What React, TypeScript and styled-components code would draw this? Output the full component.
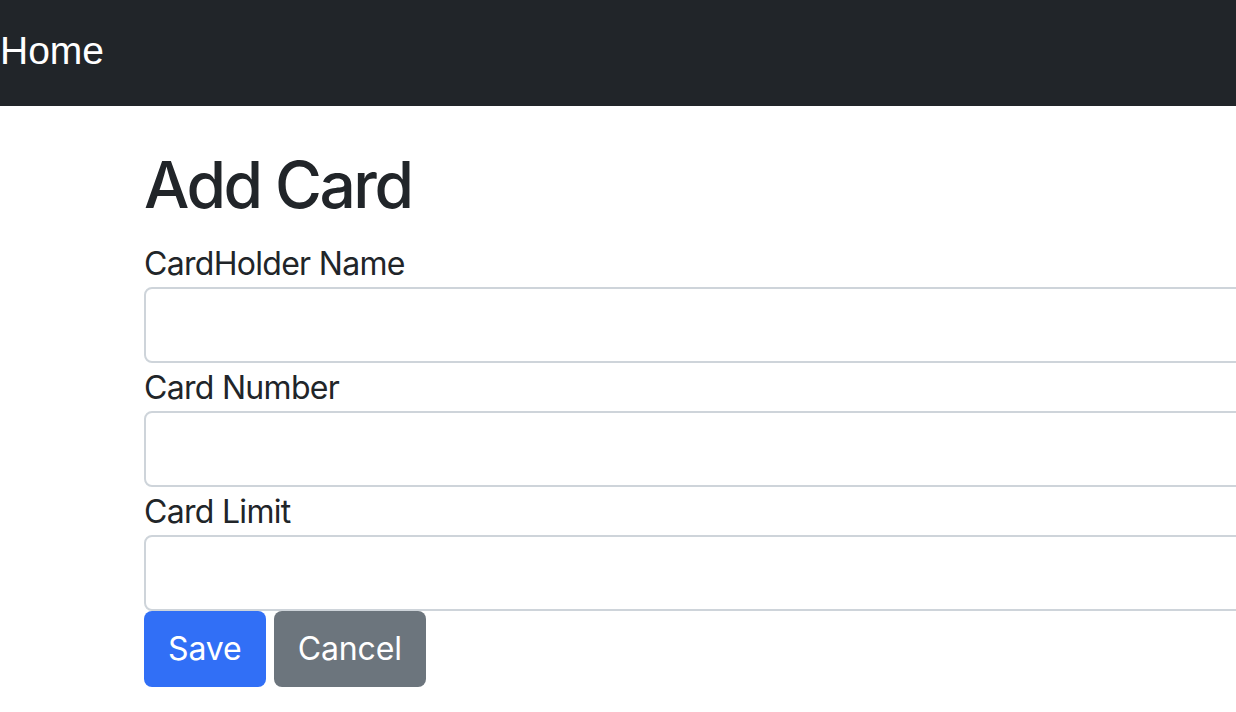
import { FunctionComponent } from "react";
import styled, { createGlobalStyle } from "styled-components";

const GlobalStyle = createGlobalStyle`
  html, body {
    margin: 0;
    padding: 0;
    overflow: hidden;
    background: #ffffff;
  }
  body {
    font-family: Inter, "Noto Sans", "Liberation Sans", sans-serif;
    color: #212529;
  }
  * {
    box-sizing: border-box;
  }
`;

const Navbar = styled.nav`
  height: 106px;
  background-color: #212529;
  display: flex;
  align-items: center;
`;

const Brand = styled.a`
  font-family: "Liberation Sans", Arial, sans-serif;
  font-size: 39px;
  line-height: 60px;
  color: #ffffff;
  text-decoration: none;
  padding-left: 0;
  margin-top: -4px;
`;

const Main = styled.main`
  padding: 41px 0 0 144px;
`;

const Title = styled.h1`
  margin: 0 0 15px;
  font-size: 64px;
  font-weight: 500;
  line-height: 1.2;
  letter-spacing: -2.5px;
`;

const Form = styled.form`
  width: 1140px;
  display: flex;
  flex-direction: column;
`;

const Label = styled.label`
  font-size: 32px;
  line-height: 48px;
  letter-spacing: -0.7px;
  display: block;
  padding-top: 1px;
  margin-bottom: -1px;
`;

const Input = styled.input`
  display: block;
  width: 100%;
  height: 76px;
  padding: 12px 24px;
  font-size: 32px;
  font-family: inherit;
  color: #212529;
  background: #ffffff;
  border: 2px solid #ced4da;
  border-radius: 8px;
  outline: none;
`;

const Actions = styled.div`
  display: flex;
  gap: 8px;
`;

const Button = styled.button<{ $variant: "primary" | "secondary" }>`
  height: 76px;
  padding: 0 24px;
  font-family: inherit;
  font-size: 32px;
  letter-spacing: -0.1px;
  color: #ffffff;
  border: none;
  border-radius: 8px;
  background-color: ${(p) => (p.$variant === "primary" ? "#316ff6" : "#6c757d")};
  cursor: pointer;
`;

const fields = ["CardHolder Name", "Card Number", "Card Limit"];

const App: FunctionComponent = () => {
  return (
    <>
      <GlobalStyle />
      <Navbar>
        <Brand href="#">Home</Brand>
      </Navbar>
      <Main>
        <Title>Add Card</Title>
        <Form onSubmit={(e) => e.preventDefault()}>
          {fields.map((f) => (
            <div key={f}>
              <Label>{f}</Label>
              <Input type="text" />
            </div>
          ))}
          <Actions>
            <Button $variant="primary" type="submit">
              Save
            </Button>
            <Button $variant="secondary" type="button">
              Cancel
            </Button>
          </Actions>
        </Form>
      </Main>
    </>
  );
};

export default App;
